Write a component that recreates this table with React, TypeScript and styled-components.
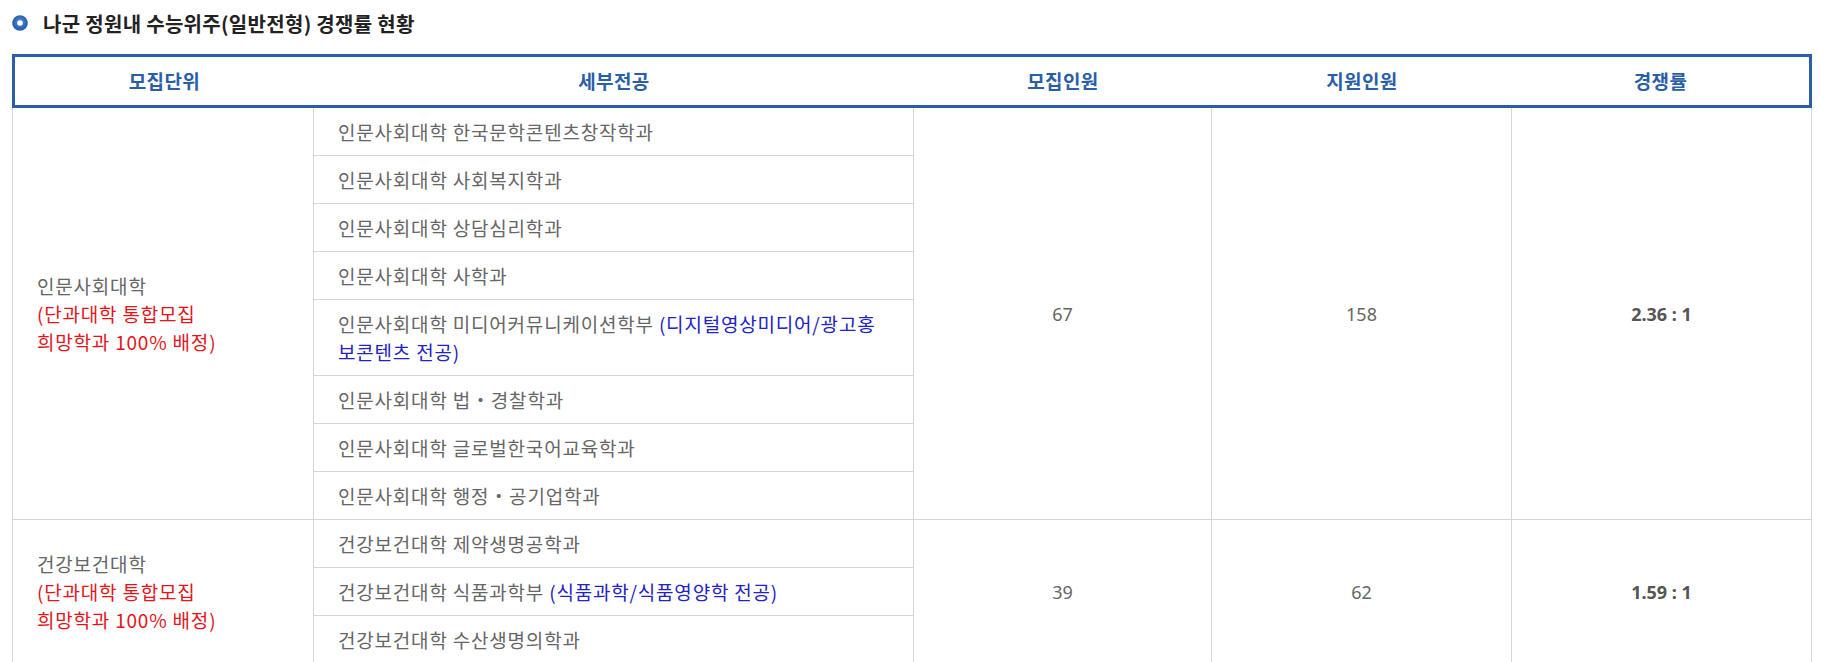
import styled, { createGlobalStyle } from "styled-components";

const GlobalStyle = createGlobalStyle`
  html, body {
    margin: 0;
    padding: 0;
    background: #fff;
  }
  body {
    font-family: "Noto Sans CJK KR", "Noto Sans", sans-serif;
    color: #666;
  }
`;

const Section = styled.section`
  padding: 9px 18px 0 12px;
`;

const Title = styled.h3`
  display: flex;
  align-items: center;
  gap: 15px;
  margin: 0 0 17px;
  height: 28px;
  font-size: 20px;
  font-weight: 700;
  color: #222;
  letter-spacing: 0.3px;
`;

const Table = styled.table`
  width: 1800px;
  table-layout: fixed;
  border-collapse: separate;
  border-spacing: 0;
  font-size: 19px;
  line-height: 28px;
  letter-spacing: 0.8px;
`;

const HeadCell = styled.th`
  height: 48px;
  padding: 0;
  border-top: 3px solid #2a5ea8;
  border-bottom: 3px solid #2a5ea8;
  color: #2a5ea8;
  font-size: 19px;
  font-weight: 700;
  letter-spacing: 0.4px;
  text-align: center;

  &:first-child {
    border-left: 3px solid #2a5ea8;
  }
  &:last-child {
    border-right: 3px solid #2a5ea8;
  }
`;

const Cell = styled.td<{ $first?: boolean }>`
  padding: 10px 24px 9px;
  border-right: 1px solid #d6d6d6;
  border-bottom: 1px solid #d6d6d6;
  border-left: ${(p) => (p.$first ? "1px solid #d6d6d6" : "none")};
  vertical-align: middle;
  color: #666;
`;

const UnitCell = styled(Cell)`
  padding-left: 24px;
`;

const NumCell = styled(Cell)<{ $bold?: boolean }>`
  text-align: center;
  font-family: "Noto Sans", "Noto Sans CJK KR", sans-serif;
  font-size: 18px;
  letter-spacing: 0;
  color: ${(p) => (p.$bold ? "#555" : "#666")};
  font-weight: ${(p) => (p.$bold ? 700 : 400)};
`;

const Note = styled.span`
  color: #e4141b;
`;

const Sub = styled.span`
  color: #2323c4;
`;

type Major = { name: string; sub?: string };

type Group = {
  unit: string;
  note: [string, string];
  majors: Major[];
  quota: number;
  applied: number;
  rate: string;
};

const groups: Group[] = [
  {
    unit: "인문사회대학",
    note: ["(단과대학 통합모집", "희망학과 100% 배정)"],
    majors: [
      { name: "인문사회대학 한국문학콘텐츠창작학과" },
      { name: "인문사회대학 사회복지학과" },
      { name: "인문사회대학 상담심리학과" },
      { name: "인문사회대학 사학과" },
      {
        name: "인문사회대학 미디어커뮤니케이션학부",
        sub: "(디지털영상미디어/광고홍보콘텐츠 전공)",
      },
      { name: "인문사회대학 법・경찰학과" },
      { name: "인문사회대학 글로벌한국어교육학과" },
      { name: "인문사회대학 행정・공기업학과" },
    ],
    quota: 67,
    applied: 158,
    rate: "2.36 : 1",
  },
  {
    unit: "건강보건대학",
    note: ["(단과대학 통합모집", "희망학과 100% 배정)"],
    majors: [
      { name: "건강보건대학 제약생명공학과" },
      { name: "건강보건대학 식품과학부", sub: "(식품과학/식품영양학 전공)" },
      { name: "건강보건대학 수산생명의학과" },
    ],
    quota: 39,
    applied: 62,
    rate: "1.59 : 1",
  },
];

function Bullet() {
  return (
    <svg width="16" height="16" viewBox="0 0 16 16">
      <defs>
        <radialGradient id="ring" cx="50%" cy="45%" r="55%">
          <stop offset="0%" stopColor="#5b93d6" />
          <stop offset="70%" stopColor="#2d68b4" />
          <stop offset="100%" stopColor="#2a5ea8" />
        </radialGradient>
      </defs>
      <circle cx="8" cy="8" r="7.8" fill="url(#ring)" />
      <circle cx="8" cy="8" r="2.8" fill="#fff" />
    </svg>
  );
}

export default function App() {
  return (
    <Section>
      <GlobalStyle />
      <Title>
        <Bullet />
        나군 정원내 수능위주(일반전형) 경쟁률 현황
      </Title>
      <Table>
        <colgroup>
          <col style={{ width: 302 }} />
          <col style={{ width: 600 }} />
          <col style={{ width: 298 }} />
          <col style={{ width: 300 }} />
          <col style={{ width: 300 }} />
        </colgroup>
        <thead>
          <tr>
            <HeadCell>모집단위</HeadCell>
            <HeadCell>세부전공</HeadCell>
            <HeadCell>모집인원</HeadCell>
            <HeadCell>지원인원</HeadCell>
            <HeadCell>경쟁률</HeadCell>
          </tr>
        </thead>
        <tbody>
          {groups.map((g) =>
            g.majors.map((m, i) => (
              <tr key={g.unit + m.name}>
                {i === 0 && (
                  <UnitCell $first rowSpan={g.majors.length}>
                    {g.unit}
                    <br />
                    <Note>
                      {g.note[0]}
                      <br />
                      {g.note[1]}
                    </Note>
                  </UnitCell>
                )}
                <Cell>
                  {m.name}
                  {m.sub && <Sub> {m.sub}</Sub>}
                </Cell>
                {i === 0 && (
                  <>
                    <NumCell rowSpan={g.majors.length}>{g.quota}</NumCell>
                    <NumCell rowSpan={g.majors.length}>{g.applied}</NumCell>
                    <NumCell $bold rowSpan={g.majors.length}>
                      {g.rate}
                    </NumCell>
                  </>
                )}
              </tr>
            ))
          )}
        </tbody>
      </Table>
    </Section>
  );
}
